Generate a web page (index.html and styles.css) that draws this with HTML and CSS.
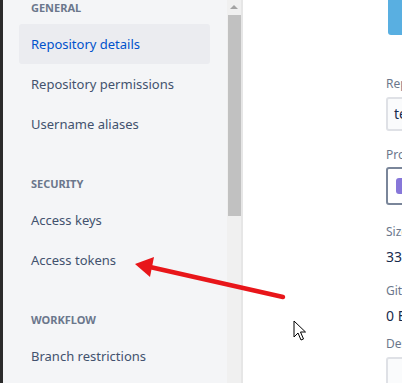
FILE: index.html
```html
<!DOCTYPE html>
<html lang="en">

<head>
    <meta charset="utf-8">
    <meta name="viewport" content="width=device-width, initial-scale=1.0">
    <title>Repository settings</title>
    <link rel="stylesheet" href="styles.css">
</head>

<body>
    <div class="frame"></div>

    <aside class="sidebar">
        <h3 class="heading first">General</h3>
        <a class="item valgt" href="#">Repository details</a>
        <a class="item" href="#">Repository permissions</a>
        <a class="item" href="#">Username aliases</a>

        <h3 class="heading">Security</h3>
        <a class="item" href="#">Access keys</a>
        <a class="item" href="#">Access tokens</a>

        <h3 class="heading">Workflow</h3>
        <a class="item" href="#">Branch restrictions</a>
    </aside>

    <div class="scrollbar">
        <div class="scroll-up"></div>
        <div class="thumb"></div>
    </div>

    <main class="content">
        <div class="form">
            <div class="avatar-btn">
                <svg width="14" height="14" viewBox="0 0 14 14">
                    <path d="M9 3 L5 7 L9 11" fill="none" stroke="#fff" stroke-width="2"/>
                </svg>
            </div>

            <label class="label first">Repository name</label>
            <div class="input">test</div>

            <label class="label">Project</label>
            <div class="input select"><span class="project-icon"></span></div>

            <label class="label size">Size</label>
            <p class="value">33 KB</p>

            <label class="label">Git LFS</label>
            <p class="value">0 B</p>

            <label class="label desc">Description</label>
            <div class="input area"></div>
        </div>
    </main>

    <!-- annotation: red arrow + mouse cursor -->
    <svg class="pil" width="402" height="383" viewBox="0 0 402 383">
        <line x1="283" y1="297" x2="150" y2="267" stroke="#e8161a" stroke-width="4.5" stroke-linecap="round"/>
        <polygon points="135,264 154,257 150,277" fill="#e8161a"/>
    </svg>
    <svg class="cursor" width="14" height="22" viewBox="0 0 14 22">
        <path d="M1 1 L1 17 L5 13 L8 20 L10.5 19 L7.5 12 L12.5 12 Z" fill="#fff" stroke="#000" stroke-width="1" stroke-linejoin="round"/>
    </svg>
</body>

</html>
```

FILE: styles.css
```css
* {
    box-sizing: border-box;
}

html,
body {
    margin: 0;
    height: 100%;
    overflow: hidden;
}

body {
    display: flex;
    font-family: "Noto Sans", "Open Sans", sans-serif;
    background-color: #fff;
    position: relative;
}

.frame {
    width: 3px;
    flex-shrink: 0;
    background-color: #2b2b2b;
}

.sidebar {
    width: 224px;
    flex-shrink: 0;
    background-color: #f4f5f7;
    display: flex;
    flex-direction: column;
    padding: 0 17px 0 16px;
}

.heading {
    margin: 32px 0 8px 12px;
    font-size: 11px;
    font-weight: 700;
    text-transform: uppercase;
    color: #6b778c;
    line-height: 16px;
}

.heading.first {
    margin-top: 0;
}

.item {
    display: block;
    flex-shrink: 0;
    height: 40px;
    line-height: 40px;
    padding-left: 12px;
    font-size: 13px;
    color: #42526e;
    text-decoration: none;
    border-radius: 3px;
    white-space: nowrap;
}

.item.valgt {
    background-color: #ebecf0;
    color: #0052cc;
}

.scrollbar {
    width: 14px;
    flex-shrink: 0;
    background-color: #f0f0f0;
    border-right: 2px solid #e6e6e6;
    display: flex;
    flex-direction: column;
    align-items: center;
    box-sizing: content-box;
}

.scroll-up {
    height: 15px;
    width: 100%;
    position: relative;
}

.scroll-up::after {
    content: "";
    position: absolute;
    left: 3px;
    top: 5px;
    border-left: 4px solid transparent;
    border-right: 4px solid transparent;
    border-bottom: 4px solid #a3a3a3;
}

.thumb {
    width: 13px;
    height: 201px;
    background-color: #c1c1c1;
}

.content {
    flex: 1;
    padding-left: 143px;
}

.form {
    width: 300px;
}

.avatar-btn {
    width: 40px;
    height: 35px;
    background-color: #59afe1;
    border-radius: 0 0 3px 3px;
    margin-left: 2px;
    display: flex;
    align-items: center;
    justify-content: center;
}

.label {
    display: block;
    margin-top: 16px;
    font-size: 12px;
    line-height: 16px;
    color: #6b778c;
}

.label.first {
    margin-top: 41px;
}

.label.size {
    margin-top: 19px;
}

.label.desc {
    margin-top: 10px;
}

.input {
    margin-top: 5px;
    height: 34px;
    border: 2px solid #dfe1e6;
    border-radius: 3px;
    background-color: #fafbfc;
    padding: 0 6px;
    font-size: 14px;
    line-height: 30px;
    color: #172b4d;
}

.input.select {
    height: 38px;
    margin-top: 4px;
    border-color: #7a869a;
    background-color: #fff;
    display: flex;
    align-items: center;
    padding: 0 8px;
}

.project-icon {
    width: 16px;
    height: 16px;
    border-radius: 3px;
    background-color: #8777d9;
}

.value {
    margin: 7px 0 0 0;
    font-size: 14px;
    line-height: 20px;
    color: #172b4d;
}

.input.area {
    margin-top: 5px;
    height: 60px;
}

.pil {
    position: absolute;
    left: 0;
    top: 0;
    pointer-events: none;
}

.cursor {
    position: absolute;
    left: 293px;
    top: 320px;
    pointer-events: none;
}
```
